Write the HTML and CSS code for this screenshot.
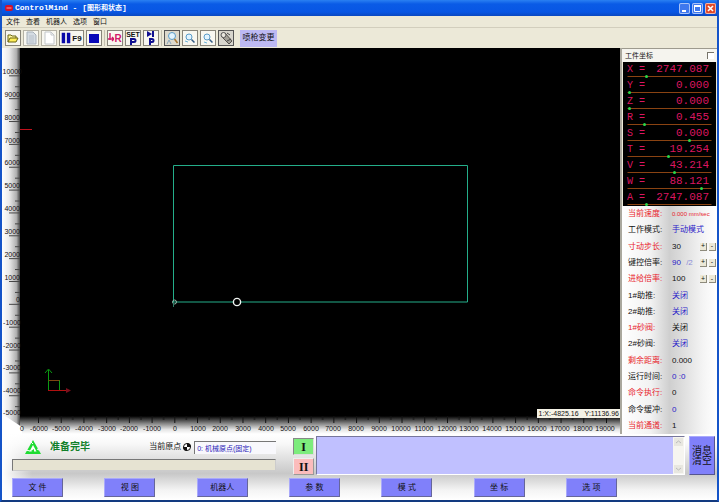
FILE: index.html
```
<!DOCTYPE html>
<html lang="zh-CN">
<head>
<meta charset="utf-8">
<title>ControlMind - [图形和状态]</title>
<link rel="stylesheet" href="styles.css">
</head>
<body>
<div class="window">
  <header class="titlebar">
    <svg class="app-icon" viewBox="0 0 8 6" aria-hidden="true"><rect width="8" height="6" rx="2" fill="#d3122a"/><path d="M1.500 3h5" stroke="#ff9a9a" stroke-width="1"/></svg>
    <h1 class="title">ControlMind - [<span class="doc-name">图形和状态</span>]</h1>
    <button class="win-btn" aria-label="最小化"><svg viewBox="0 0 11 11"><path d="M3 8h4" stroke="#fff" stroke-width="2"/></svg></button>
    <button class="win-btn" aria-label="最大化"><svg viewBox="0 0 11 11"><path d="M2.500 3h6v5.500h-6z" fill="none" stroke="#fff"/><path d="M2 3h7" stroke="#fff" stroke-width="2"/></svg></button>
    <button class="win-btn close" aria-label="关闭窗口"><svg viewBox="0 0 11 11"><path d="M3 3l5 5M8 3l-5 5" stroke="#fff" stroke-width="1.600"/></svg></button>
  </header>
  <nav class="menubar">
    <button>文件</button><button>查看</button><button>机器人</button><button>选项</button><button>窗口</button>
  </nav>
  <div class="toolbar">
    <button class="tool" aria-label="打开"><svg viewBox="0 0 14 14"><path d="M2 11V4h3l1 1h4v2" fill="#fff8a0" stroke="#6b6410"/><path d="M2 11l2-4h8l-2 4z" fill="#ffee58" stroke="#6b6410"/></svg></button>
    <button class="tool muted" aria-label="文档"><svg viewBox="0 0 14 14"><path d="M3 1h6l3 3v9H3z" fill="#d5dce3" stroke="#a9b1ba"/><path d="M5 5h5M5 7h5M5 9h5M5 11h5" stroke="#b9c1ca"/></svg></button>
    <button class="tool muted" aria-label="新建"><svg viewBox="0 0 14 14"><path d="M3 1h6l3 3v9H3z" fill="#fff" stroke="#c2c6ca"/><path d="M9 1v3h3" fill="none" stroke="#c2c6ca"/></svg></button>
    <button class="tool wide"><svg class="pause" viewBox="0 0 10 14"><path d="M0 1h4v12H0zM6 1h4v12H6z" fill="#0808a8"/></svg>F9</button>
    <button class="tool" aria-label="停止"><svg viewBox="0 0 14 14"><path d="M2 3h10v9H2z" fill="#0808b8"/></svg></button>
    <span class="divider"></span>
    <button class="tool reset"><svg class="arrow" viewBox="0 0 6 12"><path d="M2 1v7M0 7h6M4 5l2 2-2 2" fill="none" stroke="#d2186a" stroke-width="1.400"/></svg>R</button>
    <button class="tool set"><span>SET</span><svg class="flag" viewBox="0 0 8 7"><path d="M2 7V1h3a1.500 1.500 0 0 1 0 3H2" fill="none" stroke="#101090" stroke-width="2"/></svg></button>
    <button class="tool" aria-label="到点"><svg viewBox="0 0 14 14"><path d="M3 0l5 3-5 3z" fill="#101090"/><path d="M9 0v6M6 14V8h2a1.500 1.500 0 0 1 0 3H6" fill="none" stroke="#101090" stroke-width="2"/></svg></button>
    <span class="divider"></span>
    <button class="tool pressed" aria-label="放大"><svg viewBox="0 0 14 14"><circle cx="7" cy="5" r="3.500" fill="#e2f4ff" stroke="#5b9cc8"/><path d="M9.500 8l3 4" stroke="#a97832" stroke-width="1.500"/><path d="M2 13l2-4 2 4" fill="none" stroke="#87a6bd"/></svg></button>
    <button class="tool" aria-label="缩小"><svg viewBox="0 0 14 14"><circle cx="6" cy="6" r="3" fill="#e2f4ff" stroke="#5b9cc8"/><path d="M8.500 8.500l3 3" stroke="#345b82" stroke-width="1.500"/><path d="M2 10l3 1" stroke="#6cb4d8"/></svg></button>
    <button class="tool" aria-label="全图"><svg viewBox="0 0 14 14"><circle cx="6" cy="6" r="3" fill="#e2f4ff" stroke="#5b9cc8"/><path d="M8.500 8.500l3 3" stroke="#345b82" stroke-width="1.500"/><path d="M3 11l3 1" stroke="#6cb4d8"/></svg></button>
    <button class="tool pressed" aria-label="喷枪"><svg viewBox="0 0 14 14"><path d="M0 0h14v14H0z" fill="#d7d5cd"/><path d="M2 5l4-3 7 8-3 3z" fill="#a3a098" stroke="#55524c"/><circle cx="4.500" cy="4" r="2.500" fill="#e8e6de" stroke="#555"/><path d="M8 2l3 2M8 10l4-2" stroke="#444"/></svg></button>
    <button class="change">喷枪变更</button>
  </div>

  <main class="workspace">
    <section class="plot">
      <svg class="graph" viewBox="2 48 618 386" preserveAspectRatio="none" role="img" aria-label="图形">
        <defs>
          <linearGradient id="side"><stop offset="0" stop-color="#fff"/><stop offset=".4" stop-color="#eaeaea"/><stop offset=".8" stop-color="#b0b0b0"/><stop offset="1" stop-color="#444"/></linearGradient>
          <linearGradient id="base" x2="0" y2="1"><stop offset="0" stop-color="#000"/><stop offset=".4" stop-color="#808080"/><stop offset=".75" stop-color="#e4e4e4"/><stop offset="1" stop-color="#fff"/></linearGradient>
          <pattern id="majorY" x="9" y="50.500" width="11" height="22.850" patternUnits="userSpaceOnUse"><path d="M0 2.500h11M6 13.500h5" stroke="#444"/></pattern>
          <pattern id="majorX" x="38" y="416" width="22.720" height="7" patternUnits="userSpaceOnUse"><path d="M.5 0v7M12 0v4" stroke="#111"/></pattern>
        </defs>
        <rect x="2" y="48" width="618" height="386" fill="#000"/>
        <rect x="2" y="48" width="18" height="386" fill="url(#side)"/>
        <path d="M20 434v-18h600v18z" fill="url(#base)"/>
        <path d="M2 434v-20l20 13v7z" fill="#fff"/>
        <rect x="9" y="72" width="11" height="344" fill="url(#majorY)"/>
        <rect x="38" y="416" width="578" height="7" fill="url(#majorX)"/>
        <g class="scale scale-y">
          <text x="22" y="74">10000</text><text x="20" y="97">9000</text><text x="20" y="120">8000</text><text x="20" y="143">7000</text>
          <text x="20" y="165">6000</text><text x="20" y="188">5000</text><text x="20" y="211">4000</text><text x="20" y="234">3000</text>
          <text x="20" y="257">2000</text><text x="20" y="280">1000</text><text x="20" y="302">0</text><text x="21" y="325">-1000</text>
          <text x="21" y="348">-2000</text><text x="21" y="370">-3000</text><text x="21" y="393">-4000</text><text x="21" y="415">-5000</text>
        </g>
        <g class="scale scale-x">
          <text x="22" y="431">0</text><text x="39" y="431">-6000</text><text x="61" y="431">-5000</text><text x="84" y="431">-4000</text>
          <text x="107" y="431">-3000</text><text x="129" y="431">-2000</text><text x="152" y="431">-1000</text><text x="175" y="431">0</text>
          <text x="198" y="431">1000</text><text x="220" y="431">2000</text><text x="243" y="431">3000</text><text x="266" y="431">4000</text>
          <text x="288" y="431">5000</text><text x="311" y="431">6000</text><text x="333" y="431">7000</text><text x="356" y="431">8000</text>
          <text x="379" y="431">9000</text><text x="401" y="431">10000</text><text x="424" y="431">11000</text><text x="447" y="431">12000</text>
          <text x="469" y="431">13000</text><text x="492" y="431">14000</text><text x="515" y="431">15000</text><text x="537" y="431">16000</text>
          <text x="560" y="431">17000</text><text x="583" y="431">18000</text><text x="605" y="431">19000</text>
        </g>
        <path d="M20 129.500h12" stroke="#c0101c"/>
        <path d="M173.500 165.500h294v136.500h-294z" fill="none" stroke="#24ae8a"/>
        <circle cx="174.500" cy="302" r="2" fill="none" stroke="#93b5a7"/><path d="M173.500 302v5" stroke="#2c7a64"/>
        <circle cx="237" cy="302" r="3.600" fill="#000" stroke="#f0f4f2" stroke-width="1.400"/>
        <path d="M48.500 391v-21M45 373l3.500-4 3.500 4M59.500 380v11" fill="none" stroke="#0b9a12"/>
        <path d="M48.500 380.500h11" stroke="#7d4512"/><path d="M48 390.500h20" stroke="#b01010"/><path d="M66 388l5 2.500-5 2.500z" fill="#7a0f1c"/>
      </svg>
      <output class="coords"><span>1:X:-4825.16</span><span>Y:11136.96</span></output>
    </section>

    <aside class="side">
      <div class="side-head"><label for="work">工件坐标</label><input id="work" type="checkbox"></div>
      <div class="axes">
        <div class="axis"><b>X =</b><span>2747.087</span><svg viewBox="0 0 84 3"><path d="M0 1.500h84"/><circle cx="19" cy="1.500" r="1.500"/></svg></div>
        <div class="axis"><b>Y =</b><span>0.000</span><svg viewBox="0 0 84 3"><path d="M0 1.500h84"/><circle cx="2" cy="1.500" r="1.500"/></svg></div>
        <div class="axis"><b>Z =</b><span>0.000</span><svg viewBox="0 0 84 3"><path d="M0 1.500h84"/><circle cx="2" cy="1.500" r="1.500"/></svg></div>
        <div class="axis"><b>R =</b><span>0.455</span><svg viewBox="0 0 84 3"><path d="M0 1.500h84"/><circle cx="17" cy="1.500" r="1.500"/></svg></div>
        <div class="axis"><b>S =</b><span>0.000</span><svg viewBox="0 0 84 3"><path d="M0 1.500h84"/><circle cx="62" cy="1.500" r="1.500"/></svg></div>
        <div class="axis"><b>T =</b><span>19.254</span><svg viewBox="0 0 84 3"><path d="M0 1.500h84"/><circle cx="41" cy="1.500" r="1.500"/></svg></div>
        <div class="axis"><b>V =</b><span>43.214</span><svg viewBox="0 0 84 3"><path d="M0 1.500h84"/><circle cx="47" cy="1.500" r="1.500"/></svg></div>
        <div class="axis"><b>W =</b><span>88.121</span><svg viewBox="0 0 84 3"><path d="M0 1.500h84"/><circle cx="74" cy="1.500" r="1.500"/></svg></div>
        <div class="axis"><b>A =</b><span>2747.087</span><svg viewBox="0 0 84 3"><path d="M0 1.500h84"/><circle cx="19" cy="1.500" r="1.500"/></svg></div>
      </div>
      <dl class="params">
        <div><dt class="red">当前速度:</dt><dd class="speed">0.000 mm/sec</dd></div>
        <div><dt>工作模式:</dt><dd class="blue">手动模式</dd></div>
        <div><dt class="red">寸动步长:</dt><dd>30</dd><dd class="steps"><button>+</button><button>-</button></dd></div>
        <div><dt>键控倍率:</dt><dd class="blue">90 <span class="half">/2</span></dd><dd class="steps"><button>+</button><button>-</button></dd></div>
        <div><dt class="red">进给倍率:</dt><dd>100</dd><dd class="steps"><button>+</button><button>-</button></dd></div>
        <div><dt>1#助推:</dt><dd class="blue">关闭</dd></div>
        <div><dt>2#助推:</dt><dd class="blue">关闭</dd></div>
        <div><dt class="red">1#砂阀:</dt><dd>关闭</dd></div>
        <div><dt>2#砂阀:</dt><dd class="blue">关闭</dd></div>
        <div><dt class="red">剩余距离:</dt><dd>0.000</dd></div>
        <div><dt>运行时间:</dt><dd class="blue">0 :0</dd></div>
        <div><dt class="red">命令执行:</dt><dd>0</dd></div>
        <div><dt>命令缓冲:</dt><dd class="blue">0</dd></div>
        <div><dt class="red">当前通道:</dt><dd>1</dd></div>
      </dl>
    </aside>
  </main>

  <footer class="console">
    <div class="status-row">
      <div class="status">
        <div class="ready">
          <svg class="ready-icon" viewBox="0 0 16 15" aria-hidden="true"><path d="M8 0l8 14H0z" fill="#1fdc32"/><path d="M8 5l3.500 6.500h-7z" fill="#fff"/><path d="M5 1l3 3M1 10l4 1M12 9l2 1" stroke="#fff" stroke-width="1"/><path d="M6 11l3-2v4z" fill="#1fdc32"/></svg>
          <strong>准备完毕</strong>
          <label for="origin">当前原点</label>
          <svg class="origin-icon" viewBox="0 0 8 8" aria-hidden="true"><circle cx="4" cy="4" r="3.500" fill="#fff" stroke="#111"/><path d="M4 4V0a4 4 0 0 1 4 4zM4 4v4a4 4 0 0 1-4-4z" fill="#111"/></svg>
          <input id="origin" class="origin" value="0: 机械原点(固定)" readonly>
        </div>
        <div class="progress" role="progressbar" aria-label="进度"></div>
      </div>
      <div class="channels"><button class="one">I</button><button class="two">II</button></div>
      <div class="log"><textarea aria-label="消息" readonly></textarea><div class="scroll" aria-hidden="true"><svg viewBox="0 0 9 8"><path d="M2 5l2.500-2L7 5" fill="none" stroke="#bbb"/></svg><svg viewBox="0 0 9 8"><path d="M2 3l2.500 2L7 3" fill="none" stroke="#bbb"/></svg></div></div>
      <button class="clear">消息<br>清空</button>
    </div>
    <nav class="nav">
      <button>文 件</button><button>视 图</button><button>机器人</button><button>参 数</button><button>模 式</button><button>坐 标</button><button>选 项</button>
    </nav>
  </footer>
</div>
</body>
</html>
```
FILE: styles.css
```
* { box-sizing: border-box; }
html { font-size: 9px; }
body {
  margin: 0;
  font-family: "Liberation Sans", "Noto Sans CJK SC", sans-serif;
  font-size: 9px;
  line-height: 12px;
  color: #111;
}
button, input, textarea { font: inherit; color: inherit; margin: 0; padding: 0; border: 0; }
svg { display: block; }

.window {
  display: flex;
  flex-direction: column;
  min-height: 100vh;
  background: #ece9d8;
  border: solid #1554c8;
  border-width: 0 2px 2px;
  border-color: #1554c8 #1554c8 #123a80;
}

.titlebar {
  display: flex;
  align-items: center;
  gap: 2px;
  height: 16px;
  padding: 0 1px 0 3px;
  background: linear-gradient(#2a80f2, #0a5be6 25%, #0856e4 75%, #0a48c0);
}
.app-icon { width: 8px; height: 6px; }
.title {
  flex: 1;
  margin: 0;
  color: #fff;
  font-family: "Liberation Mono", "Noto Sans CJK SC", monospace;
  font-size: 8px;
  font-weight: bold;
}
.doc-name { font-size: 7px; }
.win-btn {
  width: 11px;
  height: 11px;
  border-radius: 2px;
  background: #3f78ee;
  box-shadow: inset 0 0 0 1px #a9c3f8;
}
.win-btn svg { width: 11px; height: 11px; }
.win-btn.close { background: #e0492a; box-shadow: inset 0 0 0 1px #f0b5a8; }

.menubar {
  display: flex;
  gap: 6px;
  padding: 0 4px;
  height: 12px;
  border-bottom: 1px solid #d2cebd;
}
.menubar button { background: none; line-height: 11px; font-size: 7px; }

.toolbar {
  display: flex;
  align-items: center;
  gap: 2px;
  height: 20px;
  padding: 0 3px;
}
.tool {
  display: flex;
  align-items: center;
  justify-content: center;
  gap: 1px;
  width: 16px;
  height: 16px;
  border: 1px solid #88857a;
  background: #f8f7f0;
  font-size: 9px;
  font-weight: bold;
  line-height: 7px;
}
.tool svg { width: 14px; height: 14px; }
.tool.muted { border-color: #b5b2a5; }
.tool.wide { width: 25px; font-size: 8px; }
.tool .pause { width: 10px; height: 12px; }
.tool .arrow { width: 6px; height: 12px; }
.tool .flag { width: 8px; height: 7px; }
.tool.reset { gap: 0; color: #d2186a; font-size: 10px; }
.tool.set { flex-direction: column; gap: 0; font-size: 7px; }
.tool.pressed { border-color: #555; background: #ddd9cc; }
.divider { width: 1px; height: 16px; background: #c4c0b0; }
.change {
  height: 17px;
  margin-left: 4px;
  width: 37px;
  background: #bdb9f3;
  font-size: 8px;
  white-space: nowrap;
}

.workspace {
  flex: 1;
  display: grid;
  grid-template-columns: 1fr 97px;
  min-height: 386px;
}
.plot { position: relative; background: #000; min-width: 0; }
.graph { width: 100%; height: 100%; overflow: visible; }
.scale text { font-family: "Liberation Sans", sans-serif; font-size: 7px; fill: #111; }
.scale-y text { text-anchor: end; }
.scale-x text { text-anchor: middle; }
.coords {
  position: absolute;
  right: 0;
  bottom: 16px;
  display: flex;
  gap: 6px;
  padding: 0 1px 0 2px;
  background: #f4f2e6;
  font-size: 7px;
  line-height: 9px;
}

.side {
  display: flex;
  flex-direction: column;
  border-left: 2px solid #aaa89e;
  min-width: 0;
}
.side-head {
  display: flex;
  align-items: center;
  justify-content: space-between;
  height: 14px;
  padding: 0 3px;
  border-top: 1px solid #9d9a8e;
  background: #f5f4ee;
  font-size: 7px;
}
.side-head input {
  appearance: none;
  width: 7px;
  height: 7px;
  background: #fff;
  border: solid #77746a;
  border-width: 1px 0 0 1px;
}
.axes {
  margin: 0 1px;
  padding: 0 4px;
  background: #000;
}
.axis {
  display: grid;
  grid-template-columns: 1fr auto;
  height: 16px;
  padding-top: 2px;
  color: #dc1660;
  font-family: "Liberation Mono", monospace;
  font-size: 11px;
  line-height: 11px;
}
.axis b { font-weight: normal; font-size: 10px; }
.axis span { padding-right: 3px; }
.axis svg { grid-column: 1 / 3; width: 100%; height: 3px; }
.axis path { stroke: #8a4312; }
.axis circle { fill: #2ad84a; }

.params {
  flex: 1;
  display: flex;
  flex-direction: column;
  margin: 0;
  padding-left: 6px;
  background: linear-gradient(90deg, #fff, #f2f2f2 30%, #cfcfcf 50%, #f4f4f4 85%, #fff);
  font-size: 8px;
}
.params > div {
  flex: 1;
  display: grid;
  grid-template-columns: 44px 1fr auto;
  align-items: center;
  white-space: nowrap;
}
.params dd { margin: 0; }
.params .red { color: #e8232c; }
.params .blue { color: #2a22c8; }
.params .speed { color: #e8232c; font-size: 6px; }
.params .half { color: #8c8cd8; padding-left: 3px; }
.params .steps { display: flex; gap: 2px; padding-right: 1px; }
.steps button {
  width: 7px;
  height: 8px;
  background: #ece9d8;
  border: solid #8d8a7c;
  border-width: 0 1px 1px 0;
  font-size: 7px;
  line-height: 6px;
}

.console {
  background:
    linear-gradient(90deg, #fff, transparent 30px),
    linear-gradient(#fff, #f8f8f8 15%, #c8c8c8 60%, #f4f4f4 85%, #fff);
}
.status-row {
  display: grid;
  grid-template-columns: 3fr 21px 4fr 26px;
  height: 42px;
  padding: 2px 2px 1px 10px;
}
.status { padding-right: 17px; min-width: 0; }
.ready {
  display: flex;
  align-items: center;
  height: 22px;
}
.ready-icon { width: 16px; height: 15px; margin: 0 9px 0 13px; }
.ready strong { flex: 1; color: #11802a; font-size: 10px; }
.ready label { font-size: 8px; }
.origin-icon { width: 8px; height: 8px; margin: 0 3px 0 2px; }
.origin {
  width: 82px;
  height: 13px;
  padding-left: 2px;
  background: #f8f8fc;
  border: solid #777;
  border-width: 1px 0 0 1px;
  color: #2a22b8;
  font-size: 7px;
}
.progress {
  height: 12px;
  margin-top: 1px;
  background: #e6e3d2;
  border: 1px solid;
  border-color: #777 #ccc #ccc #777;
}
.channels { display: flex; flex-direction: column; gap: 3px; padding-top: 2px; }
.channels button {
  height: 17px;
  border: 1px solid;
  border-color: #888 #ddd #ddd #888;
  font-family: "Liberation Serif", serif;
  font-size: 12px;
  font-weight: bold;
  line-height: 12px;
}
.channels .one { background: #7dec7d; }
.channels .two { background: #fbbcbc; border-color: #eee #999 #999 #eee; }
.log {
  display: flex;
  margin: 0 4px 0 2px;
  border: 1px solid;
  border-color: #77779c #fff #fff #77779c;
  background: #c0c0ff;
}
.log textarea { flex: 1; min-width: 0; background: #c0c0ff; resize: none; }
.scroll {
  display: flex;
  flex-direction: column;
  justify-content: space-between;
  width: 11px;
  padding: 1px;
  background: #f6f5f0;
}
.scroll svg { width: 9px; height: 8px; background: #e8e7e0; }
.clear {
  background: #8080fa;
  border: 1px solid;
  border-color: #a9a9fb #55558f #55558f #a9a9fb;
  font-size: 10px;
  line-height: 10px;
}
.nav {
  display: grid;
  grid-template-columns: repeat(7, 51px);
  justify-content: space-between;
  padding: 2px 100px 3px 10px;
}
.nav button {
  height: 19px;
  background: #8080fa;
  border: 1px solid;
  border-color: #a9a9fb #66669a #66669a #a9a9fb;
  font-size: 8px;
}
```
